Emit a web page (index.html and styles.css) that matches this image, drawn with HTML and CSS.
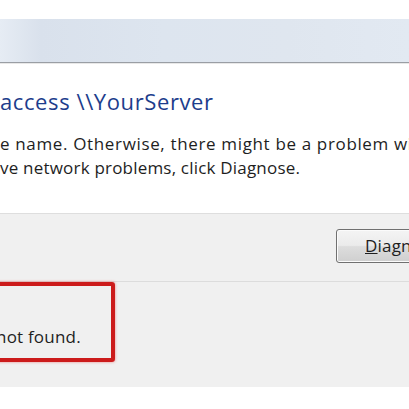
FILE: index.html
```html
<!DOCTYPE html>
<html>
<head>
<meta charset="utf-8">
<link rel="stylesheet" href="styles.css">
</head>
<body>
<div class="page">
  <div class="top-gap"></div>
  <div class="titlebar"></div>
  <div class="content">
    <div class="instruction">access \\YourServer</div>
    <p class="body-text"><span class="line-wide">e name. Otherwise, there might be a problem with</span><br>ve network problems, click Diagnose.</p>
  </div>
  <div class="footer">
    <div class="button-row">
      <div class="button"><span class="accel">D</span>iagnose</div>
    </div>
    <div class="details">
      <div class="highlight">
        <span class="detail-text">not found.</span>
      </div>
    </div>
  </div>
</div>
</body>
</html>
```
FILE: styles.css
```css
html, body {
  margin: 0;
  padding: 0;
  background: #ffffff;
}
.page {
  width: 409px;
  height: 409px;
  overflow: hidden;
  font-family: "Open Sans", "Noto Sans", sans-serif;
  background: #ffffff;
}
.top-gap {
  height: 19px;
}
.titlebar {
  height: 43px;
  background: linear-gradient(90deg, #e6ecf4 0%, #d9e1ec 10%, #dde5ef 40%, #dfe6ef 70%, #e2e9f2 100%);
  border-bottom: 1px solid #9a9ea4;
  box-shadow: 0 1px 0 #e8e8e8;
}
.content {
  height: 150px;
  padding-top: 24px;
  box-sizing: border-box;
  white-space: nowrap;
}
.instruction {
  font-size: 22px;
  line-height: 28px;
  letter-spacing: 0.6px;
  color: #1d3d8c;
}
.body-text {
  margin: 17px 0 0 0;
  font-size: 17px;
  line-height: 24px;
  letter-spacing: 0.2px;
  color: #1e1e1e;
}
.line-wide {
  letter-spacing: 0.65px;
}
.footer {
  background: #f0f0f0;
  border-top: 1px solid #dedede;
}
.button-row {
  display: flex;
  justify-content: flex-end;
  padding-top: 15px;
  height: 68px;
  box-sizing: border-box;
  border-bottom: 1px solid #dcdcdc;
}
.button {
  width: 110px;
  height: 34px;
  margin-right: -37px;
  flex-shrink: 0;
  box-sizing: border-box;
  border: 1px solid #707070;
  border-radius: 3px;
  background: linear-gradient(#f4f4f4 0%, #ebebeb 48%, #dddddd 52%, #cfcfcf 100%);
  box-shadow: inset 0 0 0 1px #fbfbfb;
  font-size: 17px;
  line-height: 32px;
  letter-spacing: 0.2px;
  color: #1e1e1e;
  padding-left: 28px;
  white-space: nowrap;
}
.accel {
  text-decoration: underline;
}
.details {
  height: 105px;
}
.highlight {
  width: 125px;
  height: 80px;
  margin-left: -10px;
  box-sizing: border-box;
  border: 4px solid #cc1b1b;
  border-radius: 3px;
  box-shadow: 0 0 3px rgba(230, 60, 60, 0.6);
  padding-top: 39px;
  padding-left: 2px;
}
.detail-text {
  font-size: 17px;
  line-height: 24px;
  letter-spacing: 0.2px;
  color: #1e1e1e;
  white-space: nowrap;
}
```
